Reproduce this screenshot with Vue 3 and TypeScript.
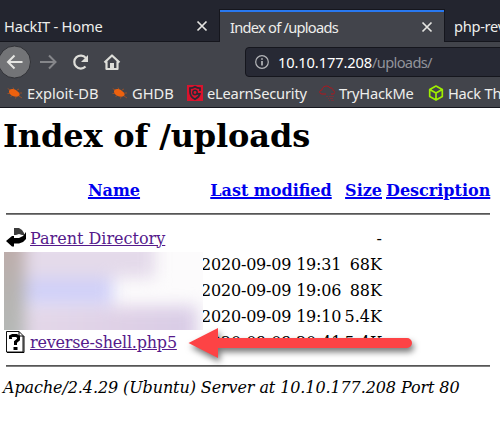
<script setup lang="ts">
interface FileRow {
  name: string
  date: string
  size: string
}

const bookmarks: { label: string; icon: string; width: number; spacing: number }[] = [
  { label: 'Exploit-DB', icon: 'bug', width: 105, spacing: 0 },
  { label: 'GHDB', icon: 'bug', width: 75, spacing: 0 },
  { label: 'eLearnSecurity', icon: 'shield', width: 132, spacing: -0.2 },
  { label: 'TryHackMe', icon: 'cloud', width: 109, spacing: -0.2 },
  { label: 'Hack Th', icon: 'cube', width: 72, spacing: -0.25 },
]

const rows: FileRow[] = [
  { name: 'Parent Directory', date: '', size: '-' },
  { name: '', date: '2020-09-09 19:31', size: '68K' },
  { name: '', date: '2020-09-09 19:06', size: '88K' },
  { name: '', date: '2020-09-09 19:10', size: '5.4K' },
  { name: 'reverse-shell.php5', date: '2020-09-09 20:41', size: '5.4K' },
]
</script>

<template>
  <div class="window">
    <header class="chrome">
      <div class="tabs">
        <div class="tab first">
          <span>HackIT - Home</span>
          <svg class="close" viewBox="0 0 12 12"><path d="M1.5 1.5l9 9M10.5 1.5l-9 9" /></svg>
        </div>
        <div class="tab active">
          <span>Index of /uploads</span>
          <svg class="close" viewBox="0 0 12 12"><path d="M1.5 1.5l9 9M10.5 1.5l-9 9" /></svg>
        </div>
        <div class="tab last"><span>php-rev</span></div>
      </div>
      <div class="toolbar">
        <svg class="nav" viewBox="0 0 130 35">
          <circle cx="14.5" cy="20" r="16" fill="#737477" stroke="#303136" />
          <path d="M22.5 20H8M14.5 13.5L8 20l6.5 6.5" stroke="#e6e6e3" stroke-width="2" />
          <path d="M40 20h15.500M49 13.500l6.500 6.500-6.500 6.500" stroke="#85868a" stroke-width="2" />
          <path d="M85.500 24.500a6.500 6.500 0 1 1 .3-8.600" stroke="#deded9" stroke-width="2.200" />
          <path d="M88 13v7h-7z" fill="#deded9" />
          <path d="M104.500 20.500l7.500-7 7.500 7M106.500 19.500v7.500h11v-7.500" stroke="#deded9" stroke-width="2.200" stroke-linejoin="round" />
          <path d="M110 27v-6h4v6z" fill="#deded9" />
        </svg>
        <div class="address">
          <svg class="info" viewBox="0 0 14 14">
            <circle cx="7" cy="7" r="6.300" />
            <path d="M7 6v4.500M7 3.300v1.500" stroke-width="1.700" />
          </svg>
          <span class="host">10.10.177.208</span><span class="path">/uploads/</span>
        </div>
      </div>
      <nav class="bookmarks">
        <a v-for="item in bookmarks" :key="item.label" class="bookmark" :style="{ width: item.width + 'px', letterSpacing: item.spacing + 'px' }">
          <svg viewBox="0 0 16 16">
            <g v-if="item.icon === 'bug'">
              <path d="M2.500 5C4 3.500 8 3.800 10 6c2 1.200 3 2.800 2.500 4.200l-1.500 1.300c-3 .5-6.500-.4-8-2.500C2 7.800 1.500 6.500 2.500 5z" fill="#ed610e" />
              <path d="M3 5L.7 3.500M7 4.500L6 2.500M10 5l2-1M3 8.500H.5M5 10.500l-1.500 1.500M9 12l-.5 1.500M12 11l3 2M12.500 8h2.500" stroke="#b8541d" stroke-width=".7" />
            </g>
            <g v-else-if="item.icon === 'shield'">
              <path d="M0 0h16v16H0z" fill="#d9132d" />
              <path d="M13 6V3.200c-2 0-3.500-.5-5-1.500-1.500 1-3 1.500-5 1.500V7c0 3 1.800 5.600 5 7.200 2.600-1.200 4.400-3 5-5.400H9.500" stroke="#282b35" stroke-width="1.700" />
              <circle cx="8" cy="7.500" r="2.200" stroke="#282b35" stroke-width="1.500" />
            </g>
            <g v-else-if="item.icon === 'cloud'" stroke="#b3161e" stroke-width="1">
              <path d="M7 9H3C0 9 0 5 3 5c.2-4 6-5.500 8-2 2-.5 3 1 3 2.500 2.500.5 2.500 3 0 3.500h-2" />
              <path d="M7 11.500h2m1 0h5M9 13.500h1m1 0h3M10 15.300h1m1 0h3" stroke="#76313a" />
            </g>
            <g v-else stroke="#9fef00" stroke-width="1.700" stroke-linejoin="round">
              <path d="M8 1l6.300 3.400v7.200L8 15l-6.300-3.400V4.400zM1.700 4.400L8 8l6.300-3.600M8 8v7" />
            </g>
          </svg>
          <span>{{ item.label }}</span>
        </a>
      </nav>
    </header>

    <main class="page">
      <h1>Index of /uploads</h1>
      <div class="listing">
        <div class="row head">
          <span class="icon"></span>
          <span class="name"><a>Name</a></span>
          <span class="date"><a>Last modified</a></span>
          <span class="size"><a>Size</a></span>
          <span class="desc"><a>Description</a></span>
        </div>
        <div class="rule"></div>
        <div v-for="(row, i) in rows" :key="i" class="row">
          <span class="icon">
            <svg v-if="i === 0" viewBox="0 0 20 22">
              <path d="M8 1h5l3 2 2 3v2h-2l-3-1-3 1H8z" fill="#3c3c3c" />
              <path d="M20 5v7l-3 3-4 1.500H8V19.500H6L0 14l6-5h2v2h5l4-2z" fill="#000" />
            </svg>
            <svg v-else-if="i === 4" viewBox="0 0 20 22">
              <path d="M.5.500h12.500l4 4v16.500H.5z" fill="#fff" stroke="#111" />
              <path d="M13 .5V5h4.500M1 21.500h17V5" fill="none" stroke="#000" />
              <path d="M4.500 8V5.500L6.500 4.500h4l2 1.500v2.500L9.500 11v3" fill="none" stroke="#000" stroke-width="3" />
              <path d="M7.500 16h4v3h-4z" fill="#000" />
            </svg>
          </span>
          <span class="name"><a v-if="row.name" :class="{ tight: i === 4 }">{{ row.name }}</a></span>
          <span class="date">{{ row.date }}</span>
          <span class="size">{{ row.size }}</span>
        </div>
        <div class="rule bottom"></div>
        <div class="redacted"><div class="smudges"><i class="edge"></i><i class="top"></i><i class="middle"></i><i class="low"></i></div></div>
        <svg class="arrow" viewBox="0 0 236 44">
          <path d="M2.500 19L32 4v10h189a5 5 0 0 1 0 10H32v10z" />
        </svg>
      </div>
      <address>Apache/2.4.29 (Ubuntu) Server at 10.10.177.208 Port 80</address>
    </main>
  </div>
</template>

<style>
body { margin: 0; overflow: hidden; }
</style>

<style scoped>
* { box-sizing: border-box; }
.window { width: 500px; height: 422px; overflow: hidden; background: #fff; }
.chrome { height: 108px; background: #42444b; border-bottom: 1px solid #15161d; font: 14.667px "Noto Sans", sans-serif; color: #eeeeec; overflow: hidden; }
.tabs { height: 42px; padding-top: 9px; display: flex; background: #23252f; }
.tab { height: 33px; display: flex; align-items: center; justify-content: space-between; white-space: nowrap; flex: none; border-bottom: 1px solid #15161d; }
.first { width: 219px; padding: 1px 11px 0 4px; letter-spacing: -.2px; }
.active { width: 226px; padding: 1px 11px 0 10px; background: #42444b; border: solid #15161d; border-width: 1px 1px 0; box-shadow: inset 0 2px #2878f0; letter-spacing: -.75px; }
.last { width: 55px; padding: 1px 0 0 9px; letter-spacing: -.3px; }
.close { width: 12px; height: 12px; }
.close path { fill: none; stroke: #e4e4e1; stroke-width: 1.7; }
.toolbar { height: 35px; display: flex; }
.nav { width: 130px; height: 35px; margin-right: 115px; flex: none; overflow: visible; fill: none; }
.address { width: 270px; flex: none; height: 30px; margin-top: 5px; padding-left: 9px; display: flex; align-items: center; background: #272934; border: 1px solid #15161d; border-radius: 4px; }
.info { width: 14px; height: 14px; margin-right: 9px; fill: none; stroke: #b5b6b9; stroke-width: 1.2; }
.host { color: #fff; letter-spacing: -.12px; }
.path { color: #92939a; letter-spacing: -.68px; }
.bookmarks { height: 30px; padding: 1px 0 0 7px; display: flex; align-items: center; }
.bookmark { flex: none; display: flex; align-items: center; white-space: nowrap; }
.bookmark svg { width: 16px; height: 16px; margin-right: 4px; flex: none; fill: none; }
.page { font: 16px "DejaVu Serif", serif; color: #000; white-space: nowrap; }
h1 { margin: 0; padding: 9px 0 0 3px; height: 69px; font-size: 32px; line-height: 38px; letter-spacing: -.14px; }
.listing { position: relative; }
.row { height: 26px; display: flex; align-items: center; padding-left: 6px; }
.row a { color: #551a8b; text-decoration: underline; }
.row a.tight { letter-spacing: -.21px; }
.row.head { font-weight: bold; }
.row.head a { color: #0000ee; text-decoration-thickness: 2px; }
.icon { width: 24px; height: 22px; }
.icon svg { display: block; width: 20px; height: 22px; }
.name { width: 168px; }
.date { width: 143px; padding-left: 3px; letter-spacing: -.2px; }
.size { width: 41px; text-align: right; }
.desc { width: 104px; margin-left: 4px; }
.head .name, .head .date { text-align: center; }
.head .date { letter-spacing: 0; }
.rule { height: 2px; width: 484px; margin: 10px 0 10px 6px; background: #808080; border-top: 1px solid #565656; }
.rule.bottom { margin-bottom: 11px; }
.redacted { position: absolute; left: 4px; top: 75px; width: 199px; height: 78px; overflow: hidden; background: #fcfbfc; }
.smudges { width: 100%; height: 100%; display: grid; grid-template: repeat(3, 26px) / 21px 178px; filter: blur(8px); }
.edge { grid-area: 1 / 1 / 4 / 2; margin: -20px 0 -20px -20px; background: linear-gradient(#c0aaa8, #b6b3b0 50%, #b4bab8); }
.top { grid-area: 1 / 2; width: 130px; margin-top: -16px; background: #e4daea; }
.middle { grid-area: 2 / 2; width: 88px; background: #d0d0f8; }
.low { grid-area: 3 / 2; width: 172px; margin: 2px 0 -18px; background: linear-gradient(90deg, #e4d8e9, #ded0e6 60%, #d8cce6); }
.arrow { position: absolute; left: 186px; top: 147px; width: 236px; height: 44px; filter: drop-shadow(2px 4px 3px #0008); }
.arrow path { fill: #fd4345; }
address { padding-left: 3px; font-size: 16px; line-height: 20px; font-style: italic; letter-spacing: -.1px; }
</style>
